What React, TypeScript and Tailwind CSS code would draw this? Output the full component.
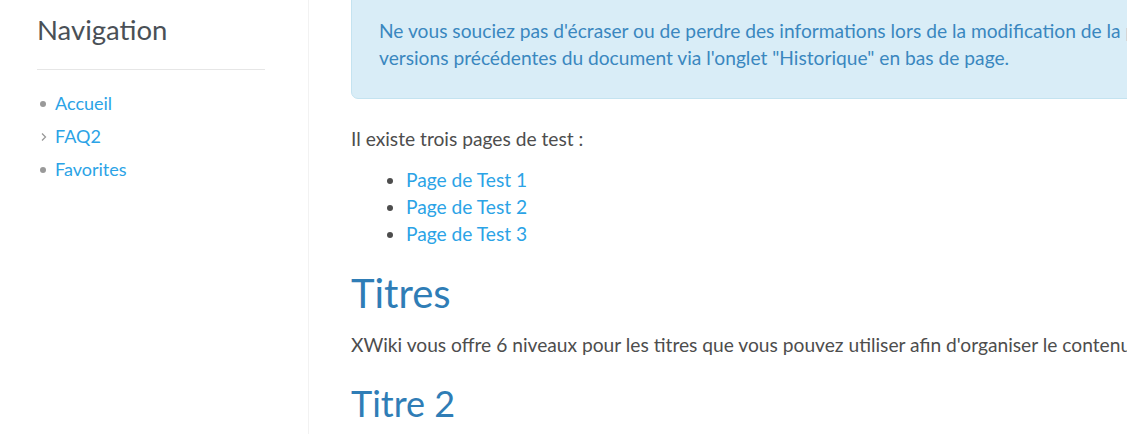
import React from 'react'

const navItems = [
  { label: 'Accueil', kind: 'dot' },
  { label: 'FAQ2', kind: 'chevron' },
  { label: 'Favorites', kind: 'dot' },
]

const testPages = ['Page de Test 1', 'Page de Test 2', 'Page de Test 3']

export default function App() {
  return (
    <div
      className="flex h-[434px] w-[1127px] overflow-hidden bg-white text-[#4d4d4d]"
      style={{ fontFamily: 'Lato, "Open Sans", sans-serif' }}
    >
      {/* left panel */}
      <aside className="w-[309px] shrink-0 border-r border-[#f2f2f2] pl-[37px] pr-[43px]">
        <h2 className="mt-[13px] text-[27.5px] leading-[34px] text-[#4a5056]">Navigation</h2>
        <hr className="mt-[22px] border-t-[1.5px] border-[#e6e6e6]" />
        <ul className="mt-[17px] text-[18px]">
          {navItems.map((item) => (
            <li key={item.label} className="flex h-[33px] items-center">
              <span className="flex w-[18px] items-center">
                {item.kind === 'dot' ? (
                  <span className="ml-[3px] block h-[6px] w-[6px] rounded-full bg-[#999]" />
                ) : (
                  <svg width="8" height="10" viewBox="0 0 8 10" className="ml-[3px]">
                    <path d="M2 1.5 L5.5 5 L2 8.5" fill="none" stroke="#999" strokeWidth="1.3" />
                  </svg>
                )}
              </span>
              <a className="text-[#2ba3e6]">{item.label}</a>
            </li>
          ))}
        </ul>
      </aside>

      {/* main content */}
      <main className="w-[1200px] shrink-0 pl-[42px] text-[19.2px] leading-[27px]">
        <div className="-mt-[11px] rounded-[7px] border border-[#c4e3f0] bg-[#d9edf7] px-[27px] py-[27px] text-[#3a87bf]">
          Ne vous souciez pas d'écraser ou de perdre des informations lors de la modification de la page, vous
          pouvez toujours accéder aux
          <br />
          versions précédentes du document via l'onglet "Historique" en bas de page.
        </div>

        <p className="mt-[26px]">Il existe trois pages de test :</p>
        <ul className="mt-[14px] list-disc pl-[55px]">
          {testPages.map((p) => (
            <li key={p}>
              <a className="text-[#2ba3e6]">{p}</a>
            </li>
          ))}
        </ul>

        <h1 className="mt-[22px] text-[40px] leading-[48px] text-[#2f7db6]">Titres</h1>
        <p className="mt-[14px]">
          XWiki vous offre 6 niveaux pour les titres que vous pouvez utiliser afin d'organiser le contenu de vos pages.
        </p>
        <h2 className="mt-[23px] text-[36px] leading-[44px] text-[#2f7db6]">Titre 2</h2>
      </main>
    </div>
  )
}
